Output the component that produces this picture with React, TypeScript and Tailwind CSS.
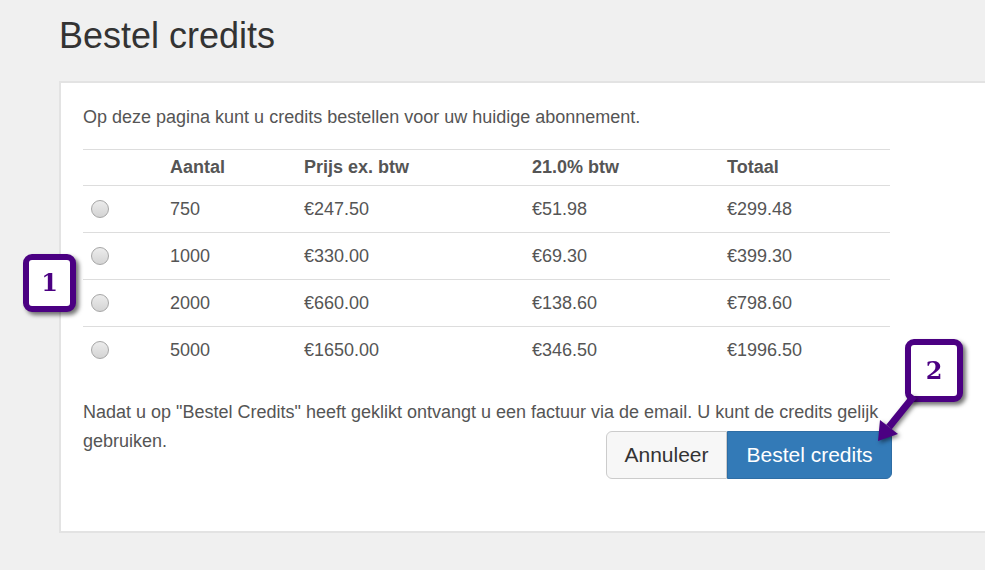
import React from "react";

const rows = [
  ["750", "€247.50", "€51.98", "€299.48"],
  ["1000", "€330.00", "€69.30", "€399.30"],
  ["2000", "€660.00", "€138.60", "€798.60"],
  ["5000", "€1650.00", "€346.50", "€1996.50"],
];

function Radio() {
  return (
    <div className="w-[18px] h-[18px] rounded-full border border-[#a6a6a6] bg-gradient-to-b from-[#ececec] to-[#d4d4d4]" />
  );
}

function Marker({ n, cls }: { n: string; cls: string }) {
  return (
    <div
      className={`absolute ${cls} rounded-[9px] border-[6px] border-[#4b0082] bg-white flex items-center justify-center [filter:drop-shadow(3px_3px_2px_rgba(0,0,0,0.55))]`}
    >
      <span className="text-[#4b0082] font-bold text-[24px] leading-none [font-family:'DejaVu_Serif','Liberation_Serif',serif]">
        {n}
      </span>
    </div>
  );
}

export default function App() {
  return (
    <div className="relative w-[985px] h-[570px] overflow-hidden bg-[#f0f0f0] pl-[59px] pt-[16px] [font-family:'Liberation_Sans',Arial,sans-serif]">
      <h1 className="text-[36px] leading-[40px] text-[#333]">Bestel credits</h1>
      <div className="mt-[25px] w-[960px] border-2 border-[#e3e3e3] bg-white pl-[22px] pt-[23px] pb-[52px] text-[18px] text-[#555]">
        <p className="leading-[22px]">
          Op deze pagina kunt u credits bestellen voor uw huidige abonnement.
        </p>
        <div className="mt-[21px] w-[807px]">
          <div className="grid grid-cols-[79px_134px_228px_195px_171px] h-[36px] items-center border-t border-[#dddddd] font-bold">
            <div />
            <div className="pl-[8px]">Aantal</div>
            <div className="pl-[8px]">Prijs ex. btw</div>
            <div className="pl-[8px]">21.0% btw</div>
            <div className="pl-[8px]">Totaal</div>
          </div>
          {rows.map((r) => (
            <div
              key={r[0]}
              className="grid grid-cols-[79px_134px_228px_195px_171px] h-[47px] items-center border-t border-[#dddddd]"
            >
              <div className="pl-[8px]">
                <Radio />
              </div>
              <div className="pl-[8px]">{r[0]}</div>
              <div className="pl-[8px]">{r[1]}</div>
              <div className="pl-[8px]">{r[2]}</div>
              <div className="pl-[8px]">{r[3]}</div>
            </div>
          ))}
        </div>
        <div className="w-[809px]">
          <p className="mt-[25px] w-[807px] leading-[29px]">
            Nadat u op "Bestel Credits" heeft geklikt ontvangt u een factuur via de email. U kunt de credits gelijk gebruiken.
          </p>
          <div className="-mt-[25px] flex justify-end">
            <button className="w-[121px] h-[48px] rounded-l-[6px] border border-[#cccccc] bg-[#f7f7f7] text-[21px] text-[#333]">
              Annuleer
            </button>
            <button className="w-[165px] h-[48px] rounded-r-[6px] border border-[#2e6da4] bg-[#337ab7] text-[21px] text-white">
              Bestel credits
            </button>
          </div>
        </div>
      </div>

      <Marker n="1" cls="left-[23px] top-[254px] w-[53px] h-[58px]" />
      <Marker n="2" cls="left-[905px] top-[339px] w-[58px] h-[63px]" />

      <svg
        className="absolute left-[860px] top-[385px] [filter:drop-shadow(2px_2px_2px_rgba(0,0,0,0.5))]"
        width="70"
        height="70"
        viewBox="860 385 70 70"
      >
        <line x1="914" y1="396" x2="889" y2="427" stroke="#4b0082" strokeWidth="7" strokeLinecap="butt" />
        <polygon points="878,441 880,420 898,434" fill="#4b0082" />
      </svg>
    </div>
  );
}
